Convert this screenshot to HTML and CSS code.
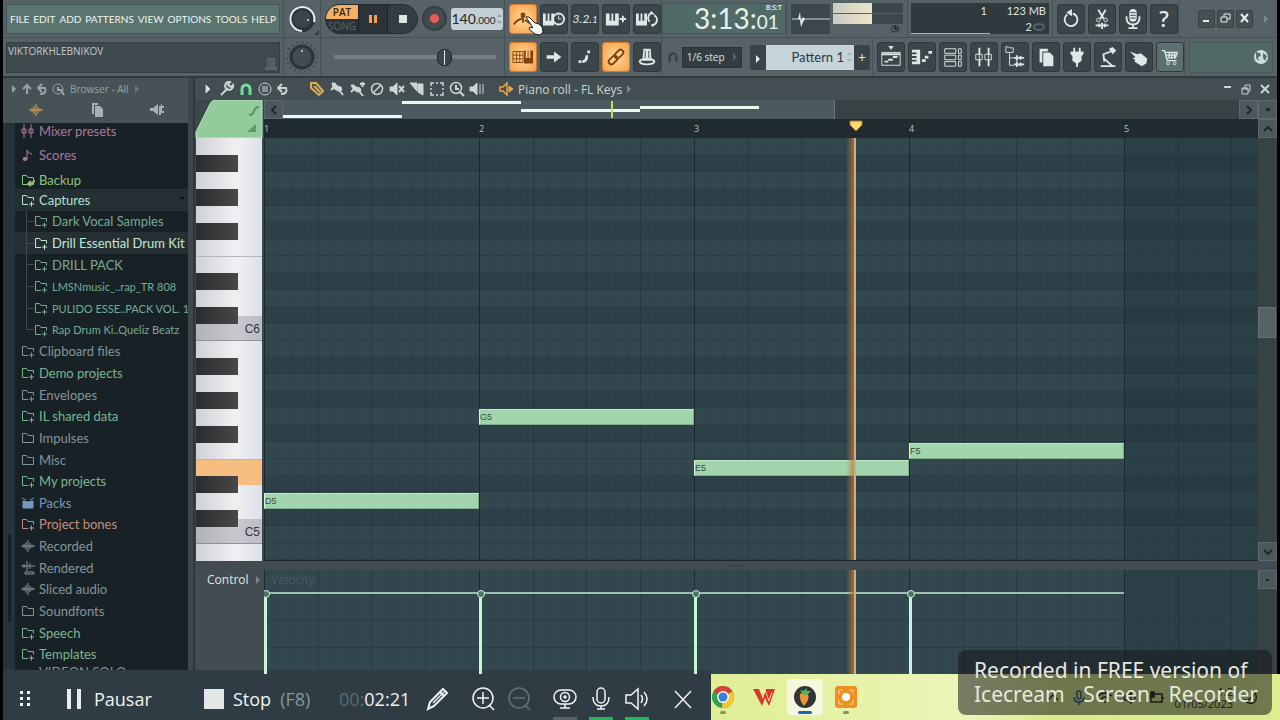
FILE: index.html
```html
<!DOCTYPE html>
<html lang="en">
<head>
  <meta charset="UTF-8">
  <title>Piano roll - FL Keys</title>
  <link rel="stylesheet" href="styles.css">
</head>
<body>
  <svg class="defs" width="0" height="0">
    <symbol id="folder" viewBox="0 0 14 14"><path d="M1.5 11.500V2.500h4l1.500 2h5.500v7z"/></symbol>
    <symbol id="folder-plus" viewBox="0 0 14 14"><path d="M7 11.500H1.500V2.500h4l1.500 2h5.500v3M10.500 8.500v5M8 11h5"/></symbol>
    <symbol id="wave" viewBox="0 0 14 14"><path d="M0 7h14M3 5v4M5 3v8M7 1v12M9 4v6M11 5.500v3"/></symbol>
    <symbol id="piano" viewBox="0 0 24 24"><path fill="currentColor" stroke="none" d="M1 6h4v8h2V6h2v8h2V6h4v13H1z"/></symbol>
    <symbol id="magnet" viewBox="0 0 14 14"><path stroke-width="3" d="M3 13V7a4 4 0 0 1 8 0v6"/></symbol>
  </svg>

  <header class="toolbar">
    <div class="bar-row">
      <div class="sec sec-menu">
        <nav class="menu">
          <a href="#">FILE</a><a href="#">EDIT</a><a href="#">ADD</a><a href="#">PATTERNS</a><a href="#">VIEW</a><a href="#">OPTIONS</a><a href="#">TOOLS</a><a href="#">HELP</a>
        </nav>
      </div>
      <div class="sec sec-knob">
        <svg width="34" height="34" viewBox="0 0 34 34"><circle cx="17" cy="17" r="11" fill="#3a444a" stroke="#2b3337" stroke-width="4"/><path d="M17 29A12 12 0 1 1 29 20" fill="none" stroke="#e8eeee" stroke-width="2"/><circle cx="23" cy="18" r="1" fill="#dde"/><path d="M34 28v5h-5z" fill="#323b3e"/></svg>
      </div>
      <div class="sec sec-transport">
        <div class="transport">
          <div class="patsong"><button class="pat">PAT</button><button class="song">SONG</button></div>
          <button class="tp" aria-label="Pause"><svg width="12" height="12"><path d="M2 2h3v8H2zM7 2h3v8H7z" fill="#f0a050"/></svg></button>
          <button class="tp tp-stop" aria-label="Stop"><svg width="12" height="12"><path d="M2 2h8v8H2z" fill="#dfe6e6"/></svg></button>
        </div>
        <button class="record" aria-label="Record"></button>
        <div class="tempo">140<small>.000</small><svg width="7" height="14" viewBox="0 0 7 14"><path d="M1 5l2.500-3L6 5zM1 9l2.500 3L6 9z" fill="#99a5a8"/></svg></div>
      </div>
      <div class="sec sec-buttons">
        <button class="tool on" aria-label="Metronome"><svg viewBox="0 0 24 24"><path d="M2 18q4-6 9-6M14 13l6 4" stroke-width="2"/><path d="M12 5v11" stroke-width="2"/><path d="M10 6h4v4h-4z" fill="currentColor"/></svg></button>
        <button class="tool" aria-label="Wait for input"><svg viewBox="0 0 24 24"><path fill="currentColor" stroke="none" d="M0 6h3v8h2V6h2v8h2V6h3v13H0z"/><circle cx="17" cy="12" r="6" fill="#3b464a" stroke-width="2"/><path d="M17 8v4h3"/></svg></button>
        <button class="tool" aria-label="Countdown"><span class="count">3.2.<small>1</small></span></button>
        <button class="tool" aria-label="Overdub"><svg viewBox="0 0 24 24"><use href="#piano"/><path d="M16 12h7M19.500 8.500v7" stroke-width="2"/></svg></button>
        <button class="tool" aria-label="Loop record"><svg viewBox="0 0 24 24"><path fill="currentColor" stroke="none" d="M0 6h3v8h2V6h2v8h2V6h3v13H0z"/><path d="M15 15a4 5 0 0 1 3-9l-2-2M20 8a4 5 0 0 1-3 10l2 2" stroke-width="2"/></svg></button>
        <svg class="pointer" width="20" height="20" viewBox="0 0 20 20"><path d="M1 1q2-1 4 1l5 5 4 1 3 3 1 5-3 3-5-1-6-5 1-2 3 1z" fill="#fff" stroke="#222" stroke-width="1"/></svg>
      </div>
      <div class="sec sec-time">
        <div class="time"><span class="bst">B:S:T</span>3:13:<small>01</small></div>
      </div>
      <div class="sec sec-scope">
        <svg class="scope" width="39" height="30"><path d="M1 15h38" stroke="#cfdada"/><path d="M7 15l2-7 1 9 2-4 2 2-2 3-2 5-1-7z" fill="#e6eded"/></svg>
        <div class="meters"><div class="meter"></div><div class="meter"></div><svg width="10" height="8" viewBox="0 0 10 8"><path d="M5 0v4h3" fill="none" stroke="#2c3538" stroke-width="2"/><ellipse cx="5" cy="4" rx="4" ry="3" fill="none" stroke="#2c3538"/></svg></div>
      </div>
      <div class="sec sec-cpu">
        <div class="cpu"><span>1</span><span>123 MB</span><span></span><span>2<svg width="14" height="8"><ellipse cx="7" cy="4" rx="5" ry="3" fill="none" stroke="#566366" stroke-width="2"/></svg></span></div>
      </div>
      <div class="sec sec-buttons">
        <button class="tool" aria-label="Undo"><svg viewBox="0 0 24 24"><path d="M8 7a7 7 0 1 0 6-1" stroke-width="2"/><path d="M13 1v8L7 5z" fill="currentColor" stroke="none"/></svg></button>
        <button class="tool" aria-label="Cut"><svg viewBox="0 0 24 24"><path d="M8 2l6 10M16 2l-6 10" stroke-width="2"/><circle cx="8" cy="13" r="2"/><circle cx="16" cy="13" r="2"/><path d="M5 19h14M9 17v4M12 16v7M15 17v4" stroke-width="2"/></svg></button>
        <button class="tool" aria-label="Record audio"><svg viewBox="0 0 24 24"><rect x="8" y="1" width="8" height="14" rx="4" fill="currentColor" stroke="none"/><path d="M9 5h6M9 8h6M9 11h6" stroke="#3b464a"/><path d="M5 9v3q1 6 7 6t7-6V9M12 18v4M7 22h10" stroke-width="2"/></svg></button>
        <button class="tool" aria-label="Help"><span class="q">?</span></button>
      </div>
      <div class="sec sec-win">
        <button class="win" aria-label="Minimize"><svg width="11" height="11"><path d="M2 8h6" stroke="#e6eded" stroke-width="2"/></svg></button>
        <button class="win" aria-label="Restore"><svg width="11" height="11"><path d="M1 4h6v5H1zM4 4V1h6v5H7" fill="none" stroke="#e6eded"/></svg></button>
        <button class="win" aria-label="Close"><svg width="11" height="11"><path d="M2 1l7 8M9 1L2 9" stroke="#e6eded" stroke-width="2"/></svg></button>
        <svg class="more" width="6" height="10"><path d="M1 1l4 4-4 4z" fill="#7d898b"/></svg>
      </div>
    </div>

    <div class="bar-row">
      <div class="sec sec-menu">
        <div class="hint">VIKTORKHLEBNIKOV<svg width="14" height="16" viewBox="0 0 14 16"><path d="M3 2h8v9H3zM1 11h12v3H1z" fill="#59666a"/><path d="M5 3v8M8 3v8" stroke="#3f4a4e"/></svg></div>
      </div>
      <div class="sec sec-knob">
        <svg width="34" height="34" viewBox="0 0 34 34"><circle cx="17" cy="17" r="15" fill="none" stroke="#333d40" stroke-width="2" stroke-dasharray="1 4"/><circle cx="17" cy="17" r="11" fill="#414c53" stroke="#2b3337" stroke-width="3"/><circle cx="17" cy="11" r="1" fill="#cdd"/></svg>
      </div>
      <div class="sec sec-transport"><input class="pitch" type="range" min="0" max="100" value="70" aria-label="Master pitch"></div>
      <div class="sec sec-buttons">
        <button class="tool on" aria-label="Typing keyboard"><svg viewBox="0 0 24 24"><path d="M1 6h11v12H1zM1 10h11M1 14h11M5 6v12M8.500 6v12"/><path fill="currentColor" stroke="none" d="M13 5h2v8h2V5h1v8h2V5h3v14H13z"/></svg></button>
        <button class="tool" aria-label="Step edit"><svg viewBox="0 0 24 24"><path fill="currentColor" stroke="none" d="M4 10h8V6l8 6-8 6v-4H4z"/></svg></button>
        <button class="tool" aria-label="Slide"><svg viewBox="0 0 24 24"><path d="M9 17q5 0 5-7" stroke-width="3"/><path d="M5 17h3M16 5v3" stroke-width="3"/></svg></button>
        <button class="tool on" aria-label="Link"><svg viewBox="0 0 24 24"><g transform="rotate(-45 12 12)"><rect x="2" y="9" width="11" height="6" rx="3" stroke-width="2"/><rect x="11" y="9" width="11" height="6" rx="3" stroke-width="2"/></g></svg></button>
        <button class="tool" aria-label="Multilink"><svg viewBox="0 0 24 24"><path fill="currentColor" stroke="none" d="M8 3h8l1 13H7z"/><path d="M10 5v9M14 5v9" stroke="#3b464a"/><ellipse cx="12" cy="17" rx="8" ry="3" stroke-width="2"/></svg></button>
      </div>
      <div class="sec sec-pattern">
        <svg class="snap-icon" width="12" height="12"><use href="#magnet"/></svg>
        <button class="snap">1/6 step<svg width="5" height="8"><path d="M1 0l4 4-4 4z" fill="#59666a"/></svg></button>
        <div class="pattern">
          <button aria-label="Pattern menu"><svg width="6" height="8"><path d="M1 0l4 4-4 4z" fill="#e6eded"/></svg></button>
          <div class="pattern-name">Pattern 1<svg width="7" height="14" viewBox="0 0 7 14"><path d="M1 5l2.500-3L6 5zM1 9l2.500 3L6 9z" fill="#a5b1b4"/></svg></div>
          <button aria-label="Add pattern">+</button>
        </div>
      </div>
      <div class="sec sec-buttons">
        <button class="tool" aria-label="Playlist"><svg viewBox="0 0 24 24"><path d="M9 0h6l-3 4z" fill="currentColor" stroke="none"/><path d="M2 7h20v14H2z"/><path d="M2 9h20M5 17h4M9 15h5M14 12h5" stroke-width="2"/></svg></button>
        <button class="tool" aria-label="Piano roll"><svg viewBox="0 0 24 24"><path d="M1 4h9v16H1v-3h5v-2H1v-2h5v-2H1V9h5V7H1z" fill="currentColor" stroke="none"/><path d="M12 16h4M15 12h4M19 7h4" stroke-width="3"/></svg></button>
        <button class="tool" aria-label="Channel rack"><svg viewBox="0 0 24 24"><path d="M3 3h12v5H3zM3 10h12v5H3zM3 17h12v5H3zM18 3h3v5h-3zM18 10h3v5h-3zM18 17h3v5h-3z"/></svg></button>
        <button class="tool" aria-label="Mixer"><svg viewBox="0 0 24 24"><path d="M7 2v20M17 2v20" stroke-width="2"/><path d="M3 9h7v6H3zM13 9h7v6h-7z" fill="#3b464a"/><path d="M7 8v8M17 8v8"/></svg></button>
        <button class="tool" aria-label="Browser"><svg viewBox="0 0 24 24"><path d="M2 7V1h3l1 1h4v5zM6 8v13h5M6 13h5"/><path d="M11 13h11M14 10v6M18 11v4M11 20h11M14 17v6M18 18v4" stroke-width="2"/></svg></button>
        <button class="tool" aria-label="Plugin database"><svg viewBox="0 0 24 24"><path d="M5 3h9v3H8v12H5zM9 7h7l4 4v11H9z" fill="currentColor" stroke="none"/></svg></button>
        <button class="tool" aria-label="Plugins"><svg viewBox="0 0 24 24"><path d="M8 2h2v4h4V2h2v4h3v3l-2 2v5l-4 3v4h-2v-4l-4-3v-5L5 9V6h3z" fill="currentColor" stroke="none"/></svg></button>
        <button class="tool" aria-label="Tempo tapper"><svg viewBox="0 0 24 24"><path d="M13 3l4-2 4 4-4 4z" fill="currentColor" stroke="none"/><path d="M15 6L7 9l1 8M8 14l9 8M4 22h16" stroke-width="2"/></svg></button>
        <button class="tool" aria-label="Touch"><svg viewBox="0 0 24 24"><path d="M2 6l8 3 4-1 7 6-1 5-5 3-8-5 1-2-3-1 3-2z" fill="currentColor" stroke="none"/></svg></button>
        <button class="tool shop" aria-label="Shop"><svg viewBox="0 0 24 24"><path d="M3 5h3l3 11h10M6 7h14l-2 6H8M11 7v6M14 7v6M17 7v6M7 10h12" stroke-width="1.500"/><circle cx="10" cy="19" r="1.500"/><circle cx="17" cy="19" r="1.500"/></svg></button>
      </div>
      <div class="sec sec-news">
        <div class="news"><svg width="16" height="16"><circle cx="8" cy="8" r="7" fill="#cfdddb"/><path d="M3 3l4 1 1 3-3 1 1 4-3-3zM10 4l4 3-2 5-2-3z" fill="#55706b"/></svg></div>
      </div>
    </div>
  </header>

  <main class="workspace">
    <aside class="browser">
      <div class="browser-head">
        <div class="crumbs">
          <svg width="6" height="8"><path d="M1 0l4 4-4 4z" fill="#98a3a4"/></svg>
          <svg width="10" height="12"><path d="M5 11V3M1 6l4-4 4 4" fill="none" stroke="#98a3a4" stroke-width="2"/></svg>
          <svg width="10" height="12"><path d="M3 11q7 0 5-6H2M5 1L1 5l4 4" fill="none" stroke="#98a3a4" stroke-width="2"/></svg>
          <svg width="13" height="13"><circle cx="6" cy="6" r="5" fill="none" stroke="#98a3a4"/><path d="M6 4v3h3l3 5" fill="none" stroke="#98a3a4" stroke-width="2"/></svg>
          <span>Browser - All</span>
          <svg width="6" height="8"><path d="M1 0l4 4-4 4z" fill="#6b7778"/></svg>
        </div>
        <div class="tabs">
          <svg class="tab-on" width="14" height="14"><use href="#wave"/></svg>
          <svg width="12" height="14"><path d="M1 0h6v2H3v9H1zM4 3h5l3 3v8H4z" fill="#a7b0b0"/></svg>
          <svg width="14" height="13"><path d="M0 5h3l5-4v11L3 8H0zM9 3h2V1h1v2h2v2h-2v3h2v2h-3v2H9z" fill="#a7b0b0"/></svg>
        </div>
      </div>
      <div class="browser-body">
        <div class="browser-scroll"><div class="browser-thumb"></div></div>
        <ul class="tree">
          <li class="first pink"><svg><path d="M3 0v14M10 0v14M1 5h4v4H1zM8 5h4v4H8z"/></svg>Mixer presets</li>
          <li class="second pink"><svg><path d="M6 11V2q1 4 5 4"/><ellipse cx="4" cy="11" rx="2" ry="1.500" fill="currentColor"/></svg>Scores</li>
          <li class="third lime"><svg><use href="#folder"/><path d="M13 7q0 4-5 4M10 8l-3 3 3 2" stroke-width="2"/></svg>Backup</li>
          <li class="open"><svg><use href="#folder-plus"/></svg>Captures<i class="caret"></i></li>
          <li class="sub"><svg><use href="#folder-plus"/></svg>Dark Vocal Samples</li>
          <li class="sub picked"><svg><use href="#folder-plus"/></svg>Drill Essential Drum Kit</li>
          <li class="sub"><svg><use href="#folder-plus"/></svg>DRILL PACK</li>
          <li class="sub long"><svg><use href="#folder-plus"/></svg>LMSNmusic_..rap_TR 808</li>
          <li class="sub long"><svg><use href="#folder-plus"/></svg>PULIDO ESSE..PACK VOL. 1</li>
          <li class="sub long last"><svg><use href="#folder-plus"/></svg>Rap Drum Ki..Queliz Beatz</li>
          <li><svg><use href="#folder-plus"/></svg>Clipboard files</li>
          <li class="green"><svg><use href="#folder-plus"/></svg>Demo projects</li>
          <li><svg><use href="#folder-plus"/></svg>Envelopes</li>
          <li class="green"><svg><use href="#folder-plus"/></svg>IL shared data</li>
          <li><svg><use href="#folder"/></svg>Impulses</li>
          <li><svg><use href="#folder"/></svg>Misc</li>
          <li class="green"><svg><use href="#folder-plus"/></svg>My projects</li>
          <li class="blue"><svg><path d="M2 5l5 1 5-1v7H2zM1 2l4 2M13 2L9 4" fill="currentColor"/></svg>Packs</li>
          <li class="red"><svg><use href="#folder-plus"/></svg>Project bones</li>
          <li><svg><use href="#wave"/></svg>Recorded</li>
          <li><svg><path d="M0 5h14M3 3v4M6 0v10M9 2v6M4 11h9v2H4z"/></svg>Rendered</li>
          <li><svg><use href="#wave"/></svg>Sliced audio</li>
          <li><svg><use href="#folder"/></svg>Soundfonts</li>
          <li class="green"><svg><use href="#folder-plus"/></svg>Speech</li>
          <li class="green"><svg><use href="#folder-plus"/></svg>Templates</li>
          <li class="cut">VIDEON SOLO</li>
        </ul>
      </div>
    </aside>

    <section class="roll">
      <div class="roll-title">
        <svg class="roll-menu" width="6" height="10"><path d="M1 1l4 4-4 4z" fill="#dde4e4"/></svg>
        <svg width="16" height="16" viewBox="0 0 16 16"><path d="M2 14l7-7M14 4a4 4 0 1 1-3-3L9 4l3 2z" stroke-width="2"/></svg>
        <svg class="snap-on" width="14" height="14"><use href="#magnet"/></svg>
        <svg width="16" height="16" viewBox="0 0 16 16"><circle cx="8" cy="8" r="6"/><path d="M5 6h6M5 8h6M5 10h6"/></svg>
        <svg width="12" height="14" viewBox="0 0 12 14"><path d="M4 12q7 0 5-6H2M5 2L1 6l4 4" stroke-width="2"/></svg>
        <svg class="pencil" width="16" height="16" viewBox="0 0 16 16"><path d="M2 2l5 0 7 8-4 4-8-7zM5 5l6 6" stroke-width="2"/></svg>
        <svg width="16" height="16" viewBox="0 0 16 16"><path d="M3 2h3l2 3 4 1 1 3-4 1-5-3z" fill="currentColor"/><path d="M2 9l3-3M10 9l4 5" stroke-width="2"/></svg>
        <svg width="16" height="16" viewBox="0 0 16 16"><path d="M2 4h3l2 2 4 1 1 3-4 1-4-3z" fill="currentColor"/><path d="M2 11l3-3M10 10l4 5M11 3h5M13.500 1v5" stroke-width="2"/></svg>
        <svg width="16" height="16" viewBox="0 0 16 16"><circle cx="8" cy="8" r="5.500" stroke-width="1.500"/><path d="M4 12l8-8" stroke-width="1.500"/></svg>
        <svg width="16" height="16" viewBox="0 0 16 16"><path d="M1 6h3l4-4v12L4 10H1z" fill="currentColor"/><path d="M10 5l5 6M15 5l-5 6" stroke-width="2"/></svg>
        <svg width="16" height="16" viewBox="0 0 16 16"><path d="M1 2h7v8z" fill="currentColor"/><path d="M9 3h5v11l-5-3z" fill="currentColor"/></svg>
        <svg width="16" height="16" viewBox="0 0 16 16"><path d="M2 5V2h3M11 2h3v3M14 11v3h-3M5 14H2v-3M2 7v2M14 7v2M7 2h2M7 14h2" stroke-width="1.500"/></svg>
        <svg width="16" height="16" viewBox="0 0 16 16"><circle cx="7" cy="7" r="5.500" stroke-width="1.500"/><path d="M7 4v4h3M11 11l4 4" stroke-width="2"/></svg>
        <svg width="16" height="16" viewBox="0 0 16 16"><path d="M1 6h3l4-4v12L4 10H1z" fill="currentColor"/><path d="M11 3v10M14 3v10"/></svg>
        <svg class="channel" width="16" height="16" viewBox="0 0 16 16"><path d="M2 6h3l4-4v12L5 10H2z" stroke-width="1.500"/><path d="M11 5l4 3-4 3z" fill="currentColor"/></svg>
        <h1>Piano roll - FL Keys</h1>
        <svg class="dim" width="6" height="10"><path d="M1 1l4 4-4 4z"/></svg>
        <span class="roll-win">
          <svg width="8" height="14"><path d="M0 5h7" stroke-width="2"/></svg>
          <svg width="10" height="14"><path d="M1 6h6v6H1zM1 7h6M4 6V3h5v6H7"/></svg>
          <svg width="10" height="14"><path d="M1 3l8 8M9 3l-8 8" stroke-width="2"/></svg>
        </span>
      </div>

      <div class="corner">
        <svg width="68" height="38" viewBox="0 0 68 38" preserveAspectRatio="none"><path d="M1 38L1 32 15 4q2-4 6-4h46v38z" fill="#92cc9a" stroke="#c0e8c4"/><path d="M54 15q4 0 5-4t5-4" fill="none" stroke="#5d8f69" stroke-width="2"/><path d="M61 24v8h-9z" fill="#5d9a6d"/></svg>
      </div>
      <div class="overview">
        <button class="arrow" aria-label="Scroll left"><svg width="8" height="10"><path d="M6 1L2 5l4 4"/></svg></button>
        <div class="minimap" id="minimap"></div>
        <button class="arrow" aria-label="Scroll right"><svg width="8" height="10"><path d="M2 1l4 4-4 4"/></svg></button>
      </div>
      <button class="arrow" aria-label="Zoom"><svg width="4" height="4"><path d="M0 2h4M0 1h4"/></svg></button>

      <div class="timeline"><span>1</span><span>2</span><span>3</span><span>4</span><span>5</span>
        <svg class="marker" width="14" height="12"><path d="M1 1h12v4L7 11 1 5z" fill="#fcd86a" stroke="#9c7d2c"/></svg>
      </div>
      <button class="arrow" aria-label="Scroll up"><svg width="10" height="8"><path d="M1 6l4-4 4 4"/></svg></button>

      <div class="keys" id="keys"></div>
      <div class="lane grid" id="grid"><i class="beyond"></i><i class="playhead"></i></div>
      <div class="vscroll"><div class="vthumb"></div><button class="arrow" aria-label="Scroll down"><svg width="10" height="8"><path d="M1 2l4 4 4-4"/></svg></button></div>

      <div class="divider">······</div>

      <div class="control">Control<svg width="5" height="8"><path d="M1 0l4 4-4 4z" fill="#7b8789"/></svg></div>
      <div class="lane velocity" id="velocity"><span class="lane-name">Velocity</span><i class="beyond"></i><i class="playhead"></i></div>
      <div class="vscroll low"><button class="arrow" aria-label="Resize"><svg width="4" height="4"><path d="M0 2h3"/></svg></button></div>
    </section>
  </main>

  <footer class="desk">
    <div class="recorder">
      <svg width="12" height="20"><path d="M1 2h3v3H1zM8 2h3v3H8zM1 8h3v3H1zM8 8h3v3H8zM1 14h3v3H1zM8 14h3v3H8z" fill="#f2f5f5"/></svg>
      <button class="rec-pause"><svg width="16" height="20"><path d="M1 0h4v20H1zM11 0h4v20h-4z" fill="#e8ecec"/></svg>Pausar</button>
      <button class="rec-stop"><svg width="20" height="20"><path d="M0 0h20v20H0z" fill="#e3e6e6"/></svg>Stop <span>(F8)</span></button>
      <div class="clock"><span>00:</span>02:21</div>
      <div class="rec-icons">
        <button aria-label="Draw"><svg viewBox="0 0 24 24"><path d="M2 22l2-7L17 2l4 4L8 19zM14 5l4 4" stroke-width="2"/><path d="M7 16L18 5" /></svg></button>
        <button class="zoom-in" aria-label="Zoom in"><svg viewBox="0 0 24 24"><circle cx="12" cy="11" r="10"/><path d="M12 5v12M6 11h12M18 18l5 5"/></svg></button>
        <button class="dim" aria-label="Zoom out"><svg viewBox="0 0 24 24"><circle cx="12" cy="11" r="10"/><path d="M6 11h12M18 18l5 5"/></svg></button>
        <button class="state" aria-label="Webcam"><svg viewBox="0 0 24 24"><rect x="1" y="3" width="22" height="14" rx="7"/><circle cx="12" cy="10" r="4.500"/><circle cx="12" cy="10" r="1"/><path d="M12 17v4M7 21h10"/></svg></button>
        <button class="state live" aria-label="Microphone"><svg viewBox="0 0 24 24"><rect x="8" y="1" width="8" height="15" rx="4"/><path d="M4 10q0 9 8 9t8-9M12 19v3M8 22h8"/></svg></button>
        <button class="state live" aria-label="Sound"><svg viewBox="0 0 24 24"><path d="M1 8h5l7-6v20l-7-6H1zM16 8q3 4 0 8M19 5q6 7 0 14"/></svg></button>
        <button class="rec-close" aria-label="Close"><svg viewBox="0 0 24 24"><path d="M4 4l16 17M20 4L4 21"/></svg></button>
      </div>
    </div>
    <div class="taskbar">
      <a class="app" href="#" aria-label="Chrome"><svg viewBox="0 0 24 24"><circle cx="12" cy="12" r="11" fill="#2fa44f"/><path d="M12 12L2.500 6.500a11 11 0 0 1 19 0z" fill="#dd4136"/><path d="M12 12l9.500-5.500A11 11 0 0 1 12 23l-1 0z" fill="#f8c62e"/><circle cx="12" cy="12" r="6" fill="#fff"/><circle cx="12" cy="12" r="4.500" fill="#3a7de0"/></svg></a>
      <a class="app quiet" href="#" aria-label="WPS"><svg viewBox="0 0 24 24"><path d="M1 4h6l4 10 3-10h9l-6 17-4-8-3 8z" fill="#dc3425"/><path d="M13 5l4 11 3-9" fill="none" stroke="#f2d5a0"/></svg></a>
      <a class="app active" href="#" aria-label="FL Studio"><svg viewBox="0 0 24 24"><circle cx="12" cy="12" r="11" fill="#30353a"/><path d="M7 9q4-3 8 0 2 5-4 12-5-6-4-12z" fill="#f3913a"/><path d="M10 10L7 5l4 1 2-3 1 3 4 0-4 4z" fill="#59b846"/></svg></a>
      <a class="app" href="#" aria-label="Icecream Screen Recorder"><svg viewBox="0 0 24 24"><rect x="1" y="1" width="22" height="22" rx="3" fill="#ee8f22"/><circle cx="12" cy="12" r="4" fill="#fff"/><path d="M5 9V5h4M15 5h4v4M19 15v4h-4M9 19H5v-4" fill="none" stroke="#fbd9a8"/></svg></a>
      <div class="tray">
        <svg viewBox="0 0 16 16"><path d="M3 10l5-5 5 5"/></svg>
        <svg class="mic" viewBox="0 0 16 16"><rect x="6" y="1" width="4" height="8" rx="2"/><path d="M3 7q0 5 5 5t5-5M8 12v3"/></svg>
        <svg viewBox="0 0 16 16"><path d="M1 6q7-6 14 0M4 9q4-4 8 0M7 12h2"/></svg>
        <svg viewBox="0 0 16 16"><path d="M1 6h3l4-3v10l-4-3H1zM11 5q2 3 0 6"/></svg>
        <svg viewBox="0 0 16 16"><path d="M2 4h11v8H2zM14 7v2"/><path d="M2 2h3v5H2z" fill="#222"/></svg>
        <div class="date"><span>1:2</span><span>01/05/2023</span></div>
        <svg viewBox="0 0 16 16"><path d="M10 2a6 6 0 1 1-8 8q8 0 8-8z"/></svg>
      </div>
    </div>
    <div class="watermark"><p>Recorded in FREE version of</p><p><span>Icecream</span><span>Screen</span><span>Recorder</span></p></div>
  </footer>

  <script>
    // rows run downwards from B6 to B4
    const names = ['B', 'A#', 'A', 'G#', 'G', 'F#', 'F', 'E', 'D#', 'D', 'C#', 'C'];
    const notes = [
      { name: 'D5', bar: 1, row: 21, mini: 16 },
      { name: 'G5', bar: 2, row: 16, mini: 2 },
      { name: 'E5', bar: 3, row: 19, mini: 10 },
      { name: 'F5', bar: 4, row: 18, mini: 7 }
    ];
    const keys = document.getElementById('keys');
    const grid = document.getElementById('grid');
    const velocity = document.getElementById('velocity');
    const minimap = document.getElementById('minimap');

    function add(parent, cls, css, text) {
      const el = document.createElement('div');
      el.className = cls;
      el.style.cssText = css;
      if (text) el.textContent = text;
      parent.appendChild(el);
    }

    // each row is two half steps high, white keys reach half way under the black ones
    add(keys, 'key-c', 'grid-row: 22 / 25', 'C6');
    add(keys, 'key-c', 'grid-row: 46 / 49', 'C5');
    add(keys, 'key-down', 'grid-row: 39 / 42');
    for (let i = 0; i < 25; i++) {
      const name = names[i % 12];
      const black = name.includes('#');
      if (black) add(keys, 'key-black', `grid-row: ${i * 2 + 1} / span 2`);
      if (name === 'E') add(keys, 'key-line', `grid-row: ${i * 2 + 1} / span 1`);
      add(grid, black ? 'row row-black' : 'row', `grid-row: ${i + 1}`);
    }
    for (const n of notes) {
      add(grid, 'note', `grid-row: ${n.row + 1}; grid-column: ${n.bar}`, n.name);
      add(velocity, 'level', `grid-column: ${n.bar}`);
      add(minimap, 'mini', `grid-column: ${n.bar}; margin-top: ${n.mini - 1}px`);
    }
    add(minimap, 'mini-cursor', '');
  </script>
</body>
</html>
```
FILE: styles.css
```css
:root { --bar: 215px; --playhead: 591px; --ui: Lato, "Open Sans", sans-serif; }
* { box-sizing: border-box; }
body {
  margin: 0; height: 100vh; display: flex; flex-direction: column; overflow: hidden;
  background: #000; color: #dde4e4; font-family: "Open Sans", sans-serif; font-size: 12px;
}
button { border: none; padding: 0; margin: 0; background: none; color: inherit; font: inherit; }
a { color: inherit; text-decoration: none; }
h1, p, ul { margin: 0; padding: 0; font-weight: normal; }
.defs { position: absolute; }

/* toolbar */
.toolbar { margin: 0 3px 0 3px; background: #566265; border-bottom: 2px solid #30393c; }
.bar-row { display: flex; height: 38px; border-bottom: 1px solid #465154; }
.bar-row + .bar-row { border-bottom: none; }
.sec { flex: none; display: flex; align-items: center; border-right: 1px solid #465154; }
.sec-menu { width: 281px; padding: 0 3px; }
.sec-knob { width: 37px; justify-content: center; }
.sec-transport { width: 184px; padding-left: 4px; gap: 4px; }
.sec-buttons { padding-left: 4px; gap: 3px; position: relative; }
.sec-time { width: 125px; }
.sec-scope { width: 121px; padding: 0 4px; gap: 3px; }
.sec-cpu { width: 145px; padding: 0 3px; }
.sec-win { flex: 1; border: none; padding-left: 19px; gap: 2px; }
.sec-pattern { width: 211px; padding-left: 5px; }
.sec-news { flex: 1; border: none; padding: 0 4px; }
.menu {
  flex: 1; height: 30px; display: flex; align-items: center; justify-content: space-between; padding: 0 3px;
  background: #5a7470; border: 1px solid #455854; color: #ecf6f2;
  font-family: var(--ui); font-size: 10px; white-space: nowrap;
}
.hint {
  flex: 1; height: 31px; padding: 0 1px; display: flex; justify-content: space-between;
  background: #3e494d; border: 1px solid #343e41; color: #c0cacb; font-size: 10px; line-height: 16px;
}
.hint svg { align-self: flex-end; }
.transport { flex: none; display: flex; width: 93px; height: 30px; border-radius: 15px; background: #2b3338; overflow: hidden; border: 1px solid #242b2e; }
.patsong { width: 32px; display: flex; flex-direction: column; }
.patsong button { height: 14px; font-size: 10px; line-height: 14px; }
.pat { background: #f5b164; color: #38250f; font-weight: 600; border-radius: 12px 0 0 0; }
.song { color: #59646a; }
.tp { width: 29px; border-left: 1px solid #1b2124; display: flex; align-items: center; justify-content: center; }
.tp-stop { background: #343d42; flex: 1; }
.record { flex: none; width: 25px; height: 25px; border-radius: 50%; background: radial-gradient(circle, #ec5c56 0 4px, #424c50 5px); border: 2px solid #353e41; }
.tempo {
  width: 52px; height: 22px; border-radius: 3px; background: #c3d0d5; color: #1d272b;
  display: flex; align-items: center; justify-content: center; font-family: var(--ui); font-size: 14px;
}
.tempo small { font-size: 10px; padding-top: 3px; }
.tool {
  flex: none; width: 28px; height: 30px; border-radius: 3px; border: 1px solid #30393c; background: #3b464a;
  color: #dfe8e8; display: flex; align-items: center; justify-content: center;
}
.tool svg { width: 22px; height: 22px; fill: none; stroke: currentColor; }
.tool.on { background: radial-gradient(#ffdc9c, #f59f48); border-color: #d97a2a; color: #82420f; }
.tool.shop { background: #5c716f; }
.count { font-family: var(--ui); font-style: italic; font-size: 12px; }
.count small { font-size: 9px; }
.q { font-size: 21px; font-weight: 600; }
.pointer { position: absolute; left: 20px; top: 16px; z-index: 2; }
.time {
  flex: 1; height: 31px; position: relative; background: #526a65; border: 1px solid #455854; color: #e6f2ee;
  padding-left: 31px; font-family: var(--ui); font-size: 28px; line-height: 29px; white-space: nowrap;
}
.time small { font-size: 19px; }
.bst { position: absolute; right: 3px; top: 0; font: 600 7px/8px "Open Sans", sans-serif; }
.scope { flex: none; background: #3c474b; }
.meters { width: 71px; height: 31px; display: flex; flex-direction: column; gap: 1px; }
.meters svg { align-self: flex-end; margin-right: 3px; }
.meter { height: 10px; background: linear-gradient(90deg, #c9cbc4, #ece5c8 39px, #3c474b 39px); }
.cpu {
  flex: 1; height: 31px; display: grid; grid-template-columns: 79px 1fr; background: #30393e;
  font-family: var(--ui); font-size: 11px; line-height: 15px; text-align: right;
}
.cpu span { padding-right: 3px; }
.cpu span:nth-child(3) { border-bottom: 1px solid #a8b2b3; }
.win { width: 17px; height: 18px; border-radius: 2px; border: 1px solid #384144; background: #455053; display: flex; align-items: center; justify-content: center; }
.more { margin-left: 8px; }
.pitch { appearance: none; width: 162px; height: 22px; margin: 0 0 0 9px; background: linear-gradient(#747f83, #747f83) center / 100% 4px no-repeat; }
.pitch::-webkit-slider-thumb { appearance: none; width: 15px; height: 17px; border-radius: 7px; border: 1px solid #1d2427; background: linear-gradient(90deg, #3c464a 6px, #dde4e4 6px 7px, #3c464a 7px); }
.snap-icon { fill: none; stroke: #3a4447; }
.snap { width: 60px; height: 21px; margin-left: 3px; background: #333d41; border: 1px solid #2a3235; font-size: 10px; white-space: nowrap; display: flex; align-items: center; justify-content: space-around; }
.pattern { display: flex; height: 25px; margin-left: 8px; }
.pattern button { width: 16px; background: #38434a; border-radius: 2px; font-size: 14px; }
.pattern-name { width: 88px; background: #c6d3d9; color: #2c383d; font-family: var(--ui); font-size: 13px; display: flex; align-items: center; justify-content: flex-end; gap: 2px; padding-right: 1px; }
.news { flex: 1; height: 31px; background: #526a65; border: 1px solid #455854; display: flex; align-items: center; justify-content: flex-end; padding-right: 3px; }

/* browser */
.workspace { flex: 1; min-height: 0; display: flex; margin: 0 3px; background: #3d484c; }
.browser { width: 192px; padding-right: 5px; margin-bottom: 4px; display: flex; flex-direction: column; border-right: 2px solid #2e373b; }
.browser-head { height: 45px; background: #465255; color: #98a3a4; }
.crumbs { height: 22px; display: flex; align-items: center; gap: 5px; padding-left: 8px; font-size: 10px; white-space: nowrap; }
.tabs { display: flex; justify-content: space-between; padding: 3px 24px 0 26px; }
.tab-on { fill: none; stroke: #d7a04f; stroke-width: 1; }
.browser-body { flex: 1; min-height: 0; display: flex; }
.browser-scroll { width: 12px; background: #28323a; display: flex; flex-direction: column; justify-content: flex-end; align-items: center; padding-bottom: 48px; }
.browser-thumb { width: 3px; height: 88px; background: #18212a; }
.tree { flex: 1; min-width: 0; display: flex; flex-direction: column; overflow: hidden; background: #182226; list-style: none; font-family: var(--ui); font-size: 13px; color: #84949c; }
.tree li { flex: 1; min-height: 0; display: flex; align-items: center; gap: 4px; padding-left: 6px; white-space: nowrap; }
.tree svg { width: 14px; height: 14px; flex: none; fill: none; stroke: currentColor; }
.tree .first { flex: none; height: 15px; }
.tree .second { flex: none; height: 33px; }
.tree .third { flex: none; height: 18px; }
.tree .pink { color: #aa769f; }
.tree .lime { color: #8fc27c; }
.tree .green { color: #78b691; }
.tree .blue { color: #7797bf; }
.tree .red { color: #c38d7d; }
.tree .open { background: #243034; color: #b4e2cc; }
.tree .sub { color: #76aa93; padding-left: 0; }
.tree .long { font-size: 11px; }
.tree .sub::before { content: ""; flex: none; width: 7px; margin: 0 -4px 0 11px; align-self: stretch; border-left: 1px solid #3d4b4e; background: linear-gradient(#3d4b4e, #3d4b4e) center / 100% 1px no-repeat; }
.tree .sub.last::before { align-self: flex-start; height: 11px; background-position: bottom; }
.tree .picked { background: #263034; color: #bfead2; }
.tree .cut { flex: none; height: 5px; align-items: flex-start; padding-left: 24px; line-height: 14px; }
.caret { margin-left: auto; margin-right: 3px; border: 3px solid transparent; border-top-color: #0c1214; }

/* piano roll */
.roll { flex: 1; min-width: 0; min-height: 0; display: grid; grid-template-columns: 69px 1fr 19px; grid-template-rows: 22px 19px 19px minmax(0, 1fr) 9px 104px; background: #3d484c; }
.roll-title { grid-column: 1 / -1; display: flex; align-items: center; gap: 4px; padding: 0 7px 0 10px; background: #434e52; color: #ccd4d4; }
.roll-title svg { fill: none; stroke: currentColor; flex: none; }
.roll-title .roll-menu { margin-right: 4px; }
.roll-title .dim { stroke: none; fill: #7b8789; }
.roll-title .snap-on { color: #6fe0a0; }
.roll-title .pencil { color: #e3a94d; margin-left: 16px; }
.roll-title .channel { color: #f0a63e; margin-left: 9px; }
.roll-title h1 { font-size: 12px; }
.roll-win { margin-left: auto; display: flex; gap: 9px; }
.corner { grid-row: 2 / 4; grid-column: 1; background: #3d484c; }
.overview { display: flex; background: #384245; }
.arrow { width: 19px; height: 19px; background: #4c585b; border: 1px solid #5d696c; display: flex; align-items: center; justify-content: center; }
.arrow svg { fill: none; stroke: #20292c; stroke-width: 2; }
.minimap { width: 552px; margin-right: auto; background: #4c5a5f; position: relative; display: grid; grid-template-columns: repeat(4, 119px) 1fr; border-right: 1px solid #67757a; }
.mini { grid-row: 1; height: 3px; background: #e9f9ee; }
.mini-cursor { position: absolute; left: 328px; top: 1px; width: 2px; height: 17px; background: #b9e06a; }
.timeline { grid-column: 2; display: grid; grid-template-columns: repeat(4, var(--bar)) 1fr; background: #202b30; position: relative; font-size: 9px; line-height: 19px; color: #b9c3c4; }
.marker { position: absolute; left: calc(var(--playhead) - 6px); top: 1px; }
.keys { display: grid; grid-template-rows: repeat(50, minmax(0, 1fr)); grid-template-columns: 42px 1fr; margin: 0 2px 0 1px; background: linear-gradient(90deg, #cfd1d6, #f0f0f3 60%, #dde1ea); }
.key-c { grid-column: 1 / -1; background: rgba(110, 110, 116, .3); border-bottom: 1px solid #8f9297; color: #32373a; font: 12px/26px "Liberation Sans", sans-serif; text-align: right; padding-right: 2px; }
.key-down { grid-column: 1 / -1; background: #f5bd80; }
.key-black { grid-column: 1; background: linear-gradient(90deg, #2b2c2e, #47484a); z-index: 1; }
.key-line { grid-column: 1 / -1; border-top: 1px solid #b4b6bb; }
.lane {
  position: relative; display: grid; grid-template-columns: repeat(4, var(--bar)) 1fr; overflow: hidden; background-color: #33474f;
  background-image:
    repeating-linear-gradient(90deg, #1c2b31 0 1px, transparent 1px 215px),
    repeating-linear-gradient(90deg, transparent 0 54px, #273a42 54px 55px, transparent 55px 107px, #273a42 107px 108px, transparent 108px 161px, #273a42 161px 162px, transparent 162px 215px),
    repeating-linear-gradient(90deg, transparent 0 13px, #2f434b 13px 14px, transparent 14px 27px, #2f434b 27px 28px, transparent 28px 40px, #2f434b 40px 41px, transparent 41px 54px);
}
.grid { grid-template-rows: repeat(25, minmax(0, 1fr)); border-bottom: 1px solid #1c272b; }
.row { grid-column: 1 / -1; border-bottom: 1px solid rgba(20, 36, 42, .2); }
.row-black { background: rgba(18, 32, 38, .15); }
.beyond { grid-column: 5; grid-row: 1 / -1; background: rgba(24, 44, 52, .25); }
.note { z-index: 1; margin-top: 1px; background: #a3d5ac; border: 1px solid #7fae8a; border-top-color: #c1e8c6; border-left: 1px solid #d5f3d8; color: #305040; font: 9px/14px "Liberation Sans", sans-serif; overflow: hidden; }
.playhead { position: absolute; z-index: 2; left: calc(var(--playhead) - 9px); top: 0; bottom: 0; width: 10px; background: linear-gradient(90deg, rgba(190, 120, 50, 0), rgba(190, 120, 55, .75)); border-right: 2px solid #d0ad86; }
.vscroll { background: #384144; display: flex; flex-direction: column; justify-content: flex-end; }
.vscroll.low { justify-content: flex-start; }
.vthumb { height: 31px; margin: 0 1px auto 0; background: #566266; border: 1px solid #657174; position: relative; top: 40%; }
.divider { grid-column: 1 / -1; background: #424c50; color: #222b2e; font-size: 10px; line-height: 9px; text-align: center; }
.control { padding: 1px 4px 0 12px; background: #434c50; font-size: 12px; line-height: 17px; display: flex; gap: 6px; color: #dfe6e6; }
.control svg { margin-top: 5px; }
.velocity { grid-template-rows: 100%; }
.velocity::after { content: ""; position: absolute; left: 0; right: 0; top: 50px; height: 26px; border: solid #2a3d44; border-width: 1px 0; }
.lane-name { position: absolute; left: 7px; top: 1px; font-size: 12px; color: #4a5c63; }
.level { grid-row: 1; margin-top: 22px; border-top: 2px solid #9dc0b2; border-left: 3px solid #c5f6d6; position: relative; z-index: 1; }
.level::before { content: ""; position: absolute; left: -5px; top: -4px; width: 6px; height: 6px; border-radius: 50%; background: #4c7564; border: 1px solid #c5f6d6; }

/* recorder and taskbar */
.desk { height: 46px; flex: none; display: flex; position: relative; }
.recorder { width: 708px; height: 50px; margin: -4px 0 0 3px; padding-left: 16px; background: #303c44; position: relative; display: flex; align-items: center; color: #f0f3f3; font-size: 18px; padding-top: 8px; }
.recorder button { display: flex; align-items: center; }
.rec-pause { margin-left: 35px; gap: 12px; width: 138px; }
.rec-stop { gap: 9px; width: 135px; }
.recorder span { color: #89949a; }
.recorder .clock span { color: #5b6870; }
.clock { width: 83px; }
.rec-icons { flex: 1; display: flex; align-self: stretch; gap: 12px; padding-left: 4px; }
.rec-icons svg { width: 24px; height: 24px; fill: none; stroke: currentColor; stroke-width: 1.5; }
.rec-icons .dim { color: #66727a; margin-right: 10px; }
.rec-icons .zoom-in { margin-left: 9px; }
.rec-icons .rec-close { margin-left: 10px; }
.rec-icons .state { border-bottom: 3px solid #5b6266; padding-top: 3px; }
.rec-icons .live { border-color: #25b45c; }
.taskbar { flex: 1; display: flex; align-items: center; gap: 5px; background: linear-gradient(90deg, #dfee95, #ecf5b8 45%, #d9ec8a 60%, #dcee8e); }
.app { width: 36px; height: 36px; border-radius: 4px; display: flex; flex-direction: column; align-items: center; justify-content: center; gap: 2px; padding-top: 4px; }
.app:first-child { margin-left: -6px; }
.app svg { width: 24px; height: 24px; flex: none; }
.app::after { content: ""; width: 6px; height: 3px; border-radius: 2px; background: #8b8f6c; }
.app.quiet::after { background: none; }
.app.active { background: #f5f8dc; }
.app.active::after { width: 14px; background: #1668b8; }
.tray { margin-left: auto; display: flex; align-items: center; gap: 10px; padding: 2px 21px 0 0; color: #202418; }
.tray svg { width: 16px; height: 16px; fill: none; stroke: currentColor; stroke-width: 1.5; }
.tray .mic { color: #2a568c; }
.date { display: flex; flex-direction: column; align-items: flex-end; font-size: 11px; line-height: 12px; }
.watermark { position: absolute; z-index: 3; right: 8px; bottom: 5px; width: 314px; height: 65px; padding: 8px 14px 0 16px; border-radius: 8px; background: rgba(22, 24, 26, .55); color: #e8e8e2; font-family: "Noto Sans", sans-serif; font-size: 21px; line-height: 24px; font-weight: 500; white-space: nowrap; }
.watermark p { display: flex; justify-content: space-between; }
```
